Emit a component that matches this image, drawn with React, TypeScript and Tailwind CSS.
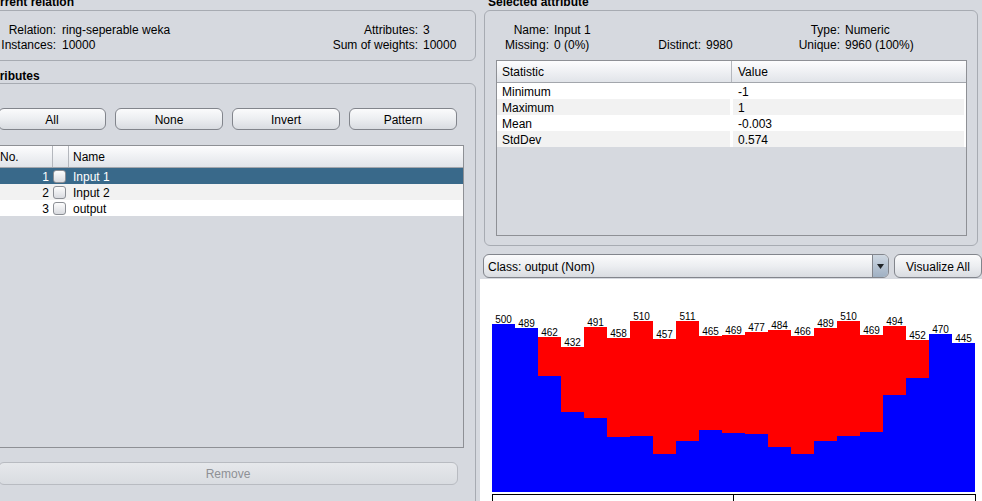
import React from "react";

const counts = [500, 489, 462, 432, 491, 458, 510, 457, 511, 465, 469, 477, 484, 466, 489, 510, 469, 494, 452, 470, 445];
const blue = [500, 489, 345, 238, 221, 163, 166, 112, 151, 184, 175, 172, 133, 112, 151, 166, 178, 288, 339, 470, 445];

function Histogram() {
  const x0 = 12;
  const bw = 23;
  const base = 213;
  const k = 0.3353;
  return (
    <svg width="502" height="222" className="block" shapeRendering="crispEdges">
      <rect width="502" height="222" fill="#ffffff" />
      {counts.map((c, i) => {
        const x = x0 + i * bw;
        const ht = Math.round(c * k);
        const hb = Math.round(blue[i] * k);
        return (
          <g key={i}>
            {ht > hb && <rect x={x} y={base - ht} width={bw} height={ht - hb} fill="#ff0000" />}
            <rect x={x} y={base - hb} width={bw} height={hb} fill="#0000ff" />
            <text
              x={x + bw / 2}
              y={base - ht - 1}
              textAnchor="middle"
              fontSize="10"
              fontFamily="'Liberation Sans', Arial, sans-serif"
              fill="#000000"
              shapeRendering="auto"
            >
              {c}
            </text>
          </g>
        );
      })}
      <rect x={12} y={215} width={484} height={1} fill="#000" />
      <rect x={12} y={215} width={1} height={7} fill="#000" />
      <rect x={253} y={215} width={1} height={7} fill="#000" />
      <rect x={495} y={215} width={1} height={7} fill="#000" />
    </svg>
  );
}

function Btn({ children, className = "" }: { children: React.ReactNode; className?: string }) {
  return (
    <div
      className={
        "flex items-center justify-center pt-[1px] rounded-[6px] border border-[#82858c] bg-linear-to-b from-[#fbfbfc] via-[#eceef1] to-[#d9dce1] text-black " +
        className
      }
    >
      {children}
    </div>
  );
}

function Check() {
  return (
    <div className="w-[13px] h-[13px] rounded-[3px] border border-[#8c8f95] bg-linear-to-b from-[#fdfdfd] to-[#d9dbe0]" />
  );
}

const attrs = [
  { n: 1, name: "Input 1", sel: true },
  { n: 2, name: "Input 2", sel: false },
  { n: 3, name: "output", sel: false },
];

const stats = [
  ["Minimum", "-1"],
  ["Maximum", "1"],
  ["Mean", "-0.003"],
  ["StdDev", "0.574"],
];

export default function App() {
  return (
    <div className="w-[982px] h-[501px] overflow-hidden bg-[#d6d9df] text-[12px] leading-none text-black font-['Liberation_Sans',Arial,sans-serif]">
      <div className="flex -ml-[21px] -mt-[5px]">
        {/* LEFT COLUMN */}
        <div className="w-[497px] shrink-0 flex flex-col">
          <div className="h-[15px] leading-[15px] font-bold pl-[5px]">Current relation</div>
          <div className="h-[51px] border border-[#a7abb2] rounded-[6px] pt-[12px]">
            <div className="flex h-[15px] leading-[15px]">
              <span className="w-[76px] text-right">Relation:</span>
              <span className="ml-[6px] w-[264px]">ring-seperable weka</span>
              <span className="w-[92px] text-right">Attributes:</span>
              <span className="ml-[5px]">3</span>
            </div>
            <div className="flex h-[15px] leading-[15px]">
              <span className="w-[76px] text-right">Instances:</span>
              <span className="ml-[6px] w-[264px]">10000</span>
              <span className="w-[92px] text-right whitespace-nowrap">Sum of weights:</span>
              <span className="ml-[5px]">10000</span>
            </div>
          </div>

          <div className="mt-[8px] h-[14px] leading-[14px] font-bold pl-[4px]">Attributes</div>
          <div className="h-[440px] border border-[#a7abb2] rounded-[6px] flex flex-col">
            <div className="mt-[24px] ml-[18px] w-[459px] grid grid-cols-4 gap-[9px]">
              <Btn className="h-[22px]">All</Btn>
              <Btn className="h-[22px]">None</Btn>
              <Btn className="h-[22px]">Invert</Btn>
              <Btn className="h-[22px]">Pattern</Btn>
            </div>

            <div className="mt-[15px] ml-[10px] w-[474px] h-[303px] border border-[#8e9095] bg-[#d6d9df] flex flex-col">
              <div className="h-[22px] flex border-b border-[#a3a6ac] bg-linear-to-b from-[#fdfdfe] to-[#e1e4e9]">
                <div className="w-[62px] border-r border-[#b4b7bd] pl-[9px] pt-[1px] flex items-center">No.</div>
                <div className="w-[16px] border-r border-[#b4b7bd]" />
                <div className="pl-[4px] pt-[1px] flex items-center">Name</div>
              </div>
              {attrs.map((a) => (
                <div
                  key={a.n}
                  className={
                    "h-[16px] flex items-center " +
                    (a.sel ? "bg-[#39698a] text-white" : a.n % 2 === 0 ? "bg-[#f2f2f2]" : "bg-white")
                  }
                >
                  <div className="w-[62px] text-right pr-[4px] pt-[1px]">{a.n}</div>
                  <div className="w-[16px] flex items-center">
                    <Check />
                  </div>
                  <div className="pl-[4px] pt-[1px]">{a.name}</div>
                </div>
              ))}
            </div>

            <div className="mt-[14px] ml-[18px] w-[460px] h-[23px] pt-[1px] rounded-[6px] border border-[#b8bbc1] bg-linear-to-b from-[#e6e8eb] to-[#d9dce1] flex items-center justify-center text-[#8e9095]">
              Remove
            </div>
          </div>
        </div>

        <div className="w-[4px] shrink-0" />

        {/* RIGHT COLUMN */}
        <div className="w-[502px] shrink-0 flex flex-col">
          <div className="h-[15px] leading-[15px] font-bold pl-[8px]">Selected attribute</div>
          <div className="ml-[4px] w-[494px] h-[236px] border border-[#a7abb2] rounded-[6px] pt-[12px] flex flex-col">
            <div className="flex h-[15px] leading-[15px]">
              <span className="w-[64px] text-right">Name:</span>
              <span className="ml-[5px] w-[100px]">Input 1</span>
              <span className="w-[47px] text-right"></span>
              <span className="ml-[5px] w-[87px]"></span>
              <span className="w-[47px] text-right">Type:</span>
              <span className="ml-[5px]">Numeric</span>
            </div>
            <div className="flex h-[15px] leading-[15px]">
              <span className="w-[64px] text-right">Missing:</span>
              <span className="ml-[5px] w-[100px]">0 (0%)</span>
              <span className="w-[47px] text-right">Distinct:</span>
              <span className="ml-[5px] w-[87px]">9980</span>
              <span className="w-[47px] text-right">Unique:</span>
              <span className="ml-[5px]">9960 (100%)</span>
            </div>

            <div className="mt-[7px] ml-[11px] w-[471px] h-[176px] border border-[#8e9095] bg-[#d6d9df] flex flex-col">
              <div className="h-[22px] flex border-b border-[#a3a6ac] bg-linear-to-b from-[#fdfdfe] to-[#e1e4e9]">
                <div className="w-[235px] border-r border-[#b4b7bd] pl-[5px] pt-[1px] flex items-center">Statistic</div>
                <div className="pl-[6px] pt-[1px] flex items-center">Value</div>
              </div>
              {stats.map(([s, v], i) => (
                <div key={s} className="h-[16px] flex bg-white">
                  <div className={"w-[233px] pl-[5px] pt-[1px] flex items-center " + (i % 2 === 1 ? "bg-[#f2f2f2]" : "bg-white")}>
                    {s}
                  </div>
                  <div
                    className={
                      "ml-[3px] mr-[2px] flex-1 pl-[5px] pt-[1px] flex items-center " + (i % 2 === 1 ? "bg-[#f2f2f2]" : "bg-white")
                    }
                  >
                    {v}
                  </div>
                </div>
              ))}
            </div>
          </div>

          <div className="mt-[8px] h-[24px] flex">
            <div className="ml-[3px] w-[406px] h-[24px] rounded-[6px] border border-[#82858c] bg-linear-to-b from-[#fbfbfc] via-[#eceef1] to-[#d9dce1] flex overflow-hidden">
              <div className="flex-1 pl-[4px] pt-[1px] flex items-center">Class: output (Nom)</div>
              <div className="w-[16px] border-l border-[#82858c] bg-linear-to-b from-[#cfd8e2] to-[#9fb0c3] flex items-center justify-center">
                <svg width="7" height="5" viewBox="0 0 7 5">
                  <path d="M0 0 H7 L3.5 5 Z" fill="#1f2327" />
                </svg>
              </div>
            </div>
            <Btn className="ml-[5px] w-[88px] h-[24px]">Visualize All</Btn>
          </div>

          <div className="mt-[1px]">
            <Histogram />
          </div>
        </div>
      </div>
    </div>
  );
}
